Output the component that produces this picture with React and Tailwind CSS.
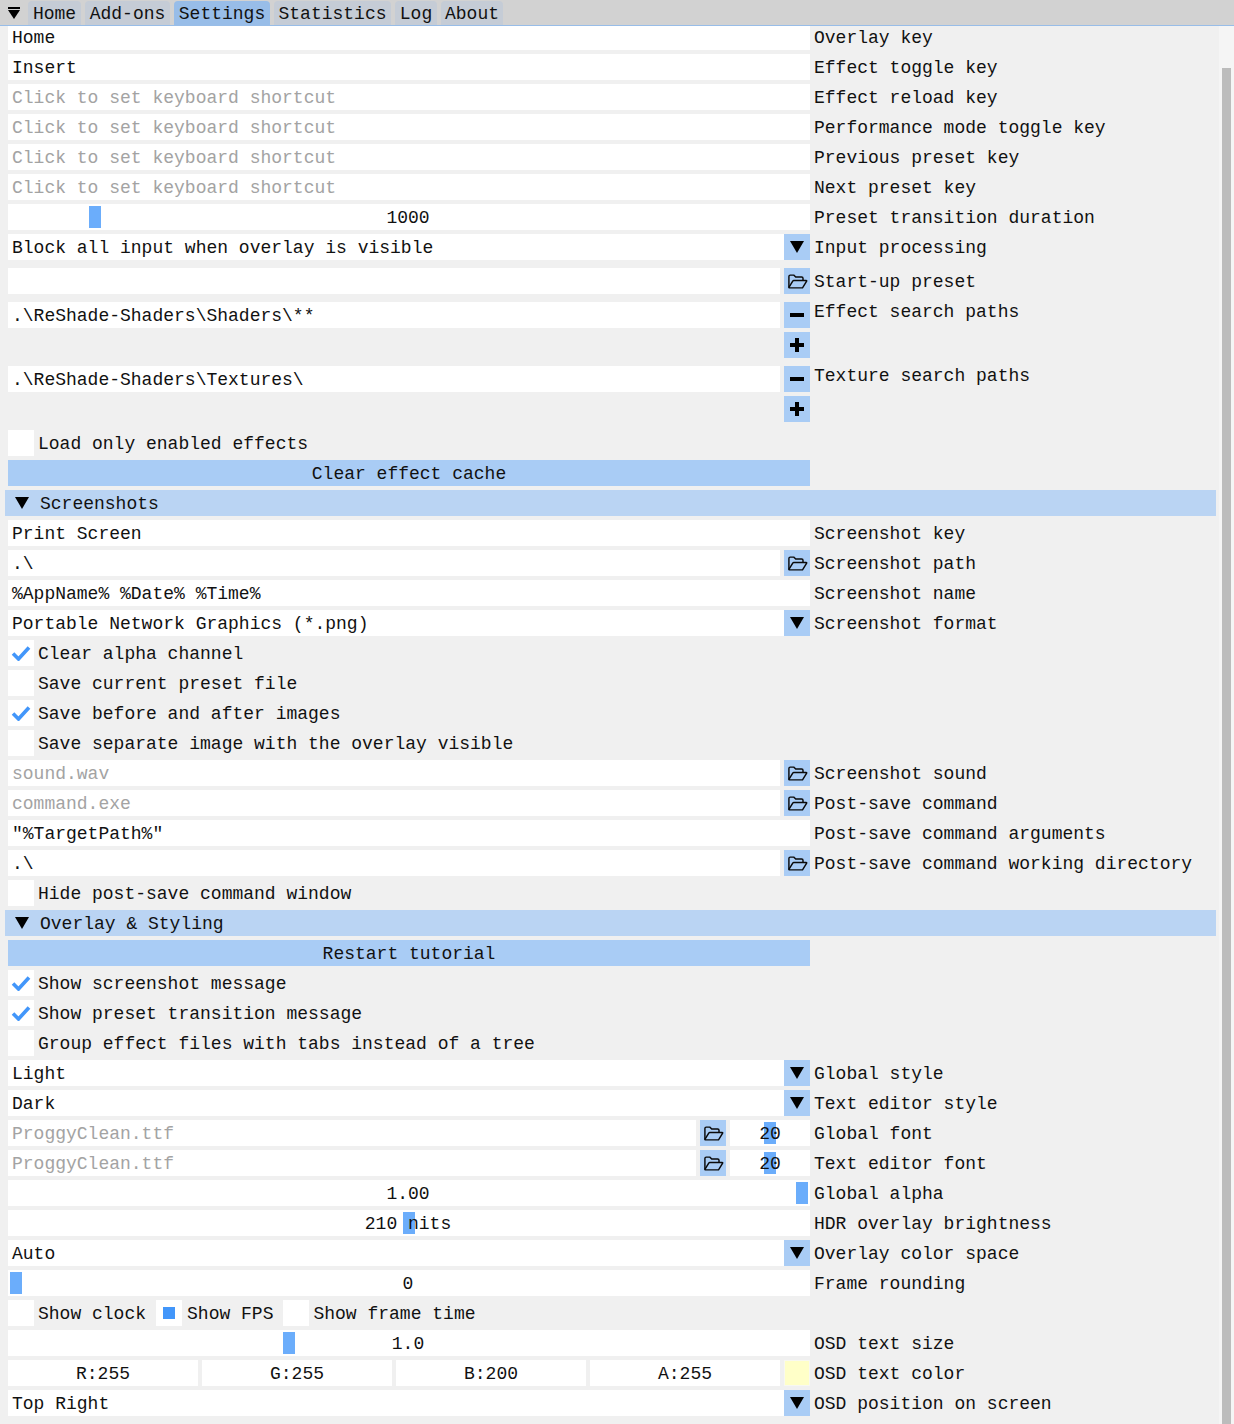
import React from "react";

const INK = "#111111";

function Tri({ size = 14, h = 12 }) {
  return (
    <svg width={size} height={h} viewBox="0 0 14 12" className="block shrink-0">
      <polygon points="0,0 14,0 7,12" fill="#000" />
    </svg>
  );
}

function FolderIcon() {
  return (
    <svg width="20" height="15" viewBox="0 0 22 16" fill="none" stroke="#0a0a0a" strokeWidth="1.6" className="block ml-[2px]">
      <path d="M1 14.5V2.5Q1 1 2.5 1H6.5L8.5 3H15Q16.5 3 16.5 4.5V6.5" />
      <path d="M1 14.5Q1.2 15 2 15H16L20.5 7.6Q20.8 6.8 20 6.8H6.5Q5.6 6.8 5.2 7.6L1 14.5Z" />
    </svg>
  );
}

function MinusIcon() {
  return <div className="w-[14px] h-[4px] bg-black" />;
}

function PlusIcon() {
  return (
    <svg width="14" height="14" viewBox="0 0 14 14" className="block">
      <path d="M5 0H9V5H14V9H9V14H5V9H0V5H5Z" fill="#000" />
    </svg>
  );
}

function IconBtn({ children }) {
  return (
    <div className="w-[26px] h-[26px] shrink-0 bg-[#a9ccf5] flex items-center justify-center">
      {children}
    </div>
  );
}

function Field({ children, muted, className = "", center }) {
  return (
    <div
      className={`h-[26px] pt-[2px] bg-white flex items-center whitespace-pre overflow-hidden ${center ? "justify-center" : "pl-[4px]"} ${
        muted ? "text-[#a3a3a3]" : ""
      } ${className}`}
    >
      {children}
    </div>
  );
}

function Label({ children, up, labelCls = "" }) {
  return (
    <div className={`ml-[4px] pt-[2px] whitespace-pre h-[26px] flex items-center ${up ? "-mt-[4px]" : ""} ${labelCls}`}>{children}</div>
  );
}

function Row({ children, label, up, className = "", labelCls }) {
  return (
    <div className={`flex h-[26px] ${up ? "items-start" : ""} ${className}`}>
      <div className="w-[802px] shrink-0 flex gap-[4px]">{children}</div>
      {label ? <Label up={up} labelCls={labelCls}>{label}</Label> : null}
    </div>
  );
}

function TextRow({ value, muted, label, cls }) {
  return (
    <Row label={label}>
      <Field muted={muted} className={`flex-1 ${cls || ""}`}>{value}</Field>
    </Row>
  );
}

function ComboRow({ value, label }) {
  return (
    <Row label={label}>
      <Field className="flex-1">{value}</Field>
      <div className="-ml-[4px]">
        <IconBtn><Tri /></IconBtn>
      </div>
    </Row>
  );
}

function PathRow({ value, muted, label }) {
  return (
    <Row label={label}>
      <Field muted={muted} className="flex-1">{value}</Field>
      <IconBtn><FolderIcon /></IconBtn>
    </Row>
  );
}

function Thumb({ className }) {
  return <div className={`absolute top-[2px] w-[12px] h-[22px] bg-[#6badfb] ${className}`} />;
}

function SliderRow({ value, thumb, label }) {
  return (
    <Row label={label}>
      <div className="relative flex-1 h-[26px] pt-[2px] pr-[2px] bg-white flex items-center justify-center whitespace-pre">
        <Thumb className={thumb} />
        <span className="relative">{value}</span>
      </div>
    </Row>
  );
}

function Check({ checked }) {
  return (
    <div className="w-[26px] h-[26px] bg-white shrink-0 flex items-center justify-center">
      {checked ? (
        <svg width="20" height="16" viewBox="0 0 20 16" className="block">
          <path d="M2 8.5L7.5 14L18 2.5" fill="none" stroke="#4296fa" strokeWidth="3.6" />
        </svg>
      ) : null}
    </div>
  );
}

function CheckRow({ checked, label }) {
  return (
    <div className="flex items-center h-[26px] gap-[4px] whitespace-pre">
      <Check checked={checked} />
      <span className="pt-[2px]">{label}</span>
    </div>
  );
}

function Wide({ children }) {
  return (
    <div className="w-[802px] h-[26px] pt-[2px] bg-[#a9ccf5] flex items-center justify-center whitespace-pre">{children}</div>
  );
}

function Section({ children }) {
  return (
    <div className="-ml-[3px] h-[26px] bg-[#bad4f3] flex items-center gap-[11px] pl-[10px] whitespace-pre">
      <Tri />
      <span className="pt-[2px]">{children}</span>
    </div>
  );
}

function FontRow({ value, label }) {
  return (
    <Row label={label}>
      <div className="w-[688px] shrink-0"><Field muted>{value}</Field></div>
      <IconBtn><FolderIcon /></IconBtn>
      <div className="relative flex-1 h-[26px] pt-[2px] bg-white flex items-center justify-center">
        <Thumb className="left-[34px]" />
        <span className="relative">20</span>
      </div>
    </Row>
  );
}

function Tab({ children, active, className }) {
  return (
    <div
      className={`h-[24px] pt-[2px] rounded-t-[4px] flex items-center justify-center ${active ? "bg-[#98bde8]" : "bg-[#c5ccd6]"} ${className}`}
    >
      {children}
    </div>
  );
}

export default function App() {
  return (
    <div
      className="w-[1234px] h-[1424px] overflow-hidden bg-[#f0f0f0] flex flex-col text-[18px] leading-[20px]"
      style={{ fontFamily: '"Liberation Mono", monospace', color: INK }}
    >
      <div className="h-[26px] shrink-0 bg-[#d2d2d2] border-b border-[#98bde8] flex items-end gap-[4px] pl-[8px]">
        <div className="w-[16px] h-[25px] flex flex-col pt-[7px] gap-[1px]">
          <div className="w-[12px] h-[2px] bg-black" />
          <svg width="12" height="9" viewBox="0 0 12 9" className="block">
            <polygon points="0,0 12,0 6,9" fill="#000" />
          </svg>
        </div>
        <Tab className="w-[53px]">Home</Tab>
        <Tab className="w-[85px]">Add-ons</Tab>
        <Tab active className="w-[96px]">Settings</Tab>
        <Tab className="w-[117px]">Statistics</Tab>
        <Tab className="w-[42px]">Log</Tab>
        <Tab className="w-[62px]">About</Tab>
      </div>

      <div className="flex-1 flex min-h-0">
        <div className="w-[1219px] pl-[8px] pr-[3px] flex flex-col gap-[4px]">
          <Row label="Overlay key" className="!h-[24px]" labelCls="-mt-[2px]">
            <div className="h-[24px] flex-1 bg-white flex items-center pl-[4px] pb-[1px]">Home</div>
          </Row>
          <TextRow value="Insert" label="Effect toggle key" />
          <TextRow muted value="Click to set keyboard shortcut" label="Effect reload key" />
          <TextRow muted value="Click to set keyboard shortcut" label="Performance mode toggle key" />
          <TextRow muted value="Click to set keyboard shortcut" label="Previous preset key" />
          <TextRow muted value="Click to set keyboard shortcut" label="Next preset key" />
          <SliderRow value="1000" thumb="left-[81px]" label="Preset transition duration" />
          <ComboRow value="Block all input when overlay is visible" label="Input processing" />
          <div className="mt-[4px]">
            <PathRow value="" label="Start-up preset" />
          </div>
          <div className="mt-[4px]">
            <Row label="Effect search paths" up>
              <Field className="flex-1">.\ReShade-Shaders\Shaders\**</Field>
              <IconBtn><MinusIcon /></IconBtn>
            </Row>
          </div>
          <Row>
            <div className="flex-1" />
            <IconBtn><PlusIcon /></IconBtn>
          </Row>
          <div className="mt-[4px]">
            <Row label="Texture search paths" up>
              <Field className="flex-1">.\ReShade-Shaders\Textures\</Field>
              <IconBtn><MinusIcon /></IconBtn>
            </Row>
          </div>
          <Row>
            <div className="flex-1" />
            <IconBtn><PlusIcon /></IconBtn>
          </Row>
          <div className="mt-[4px]">
            <CheckRow label="Load only enabled effects" />
          </div>
          <Wide>Clear effect cache</Wide>
          <Section>Screenshots</Section>
          <TextRow value="Print Screen" label="Screenshot key" />
          <PathRow value=".\" label="Screenshot path" />
          <TextRow value="%AppName% %Date% %Time%" label="Screenshot name" />
          <ComboRow value="Portable Network Graphics (*.png)" label="Screenshot format" />
          <CheckRow checked label="Clear alpha channel" />
          <CheckRow label="Save current preset file" />
          <CheckRow checked label="Save before and after images" />
          <CheckRow label="Save separate image with the overlay visible" />
          <PathRow muted value="sound.wav" label="Screenshot sound" />
          <PathRow muted value="command.exe" label="Post-save command" />
          <TextRow value={'"%TargetPath%"'} label="Post-save command arguments" />
          <PathRow value=".\" label="Post-save command working directory" />
          <CheckRow label="Hide post-save command window" />
          <Section>Overlay &amp; Styling</Section>
          <Wide>Restart tutorial</Wide>
          <CheckRow checked label="Show screenshot message" />
          <CheckRow checked label="Show preset transition message" />
          <CheckRow label="Group effect files with tabs instead of a tree" />
          <ComboRow value="Light" label="Global style" />
          <ComboRow value="Dark" label="Text editor style" />
          <FontRow value="ProggyClean.ttf" label="Global font" />
          <FontRow value="ProggyClean.ttf" label="Text editor font" />
          <SliderRow value="1.00" thumb="left-[788px]" label="Global alpha" />
          <SliderRow value="210 nits" thumb="left-[395px]" label="HDR overlay brightness" />
          <ComboRow value="Auto" label="Overlay color space" />
          <SliderRow value="0" thumb="left-[2px]" label="Frame rounding" />
          <div className="flex items-center h-[26px] whitespace-pre">
            <Check />
            <span className="ml-[4px] pt-[2px]">Show clock</span>
            <div className="ml-[10px] w-[26px] h-[26px] bg-white flex items-center justify-center">
              <div className="w-[12px] h-[12px] bg-[#4296fa]" />
            </div>
            <span className="ml-[5px] pt-[2px]">Show FPS</span>
            <div className="ml-[10px]"><Check /></div>
            <span className="ml-[4px] pt-[2px]">Show frame time</span>
          </div>
          <SliderRow value="1.0" thumb="left-[275px]" label="OSD text size" />
          <Row label="OSD text color">
            <Field center className="flex-1">R:255</Field>
            <Field center className="flex-1">G:255</Field>
            <Field center className="flex-1">B:200</Field>
            <Field center className="flex-1">A:255</Field>
            <div className="w-[26px] h-[26px] shrink-0 bg-[#ffffc8] border border-[#f8f8f0]" />
          </Row>
          <ComboRow value="Top Right" label="OSD position on screen" />
        </div>

        <div className="w-[15px] shrink-0 bg-[#f5f5f5] pt-[42px] px-[3px] flex">
          <div className="flex-1 bg-[#bcbcbc]" />
        </div>
      </div>
    </div>
  );
}
